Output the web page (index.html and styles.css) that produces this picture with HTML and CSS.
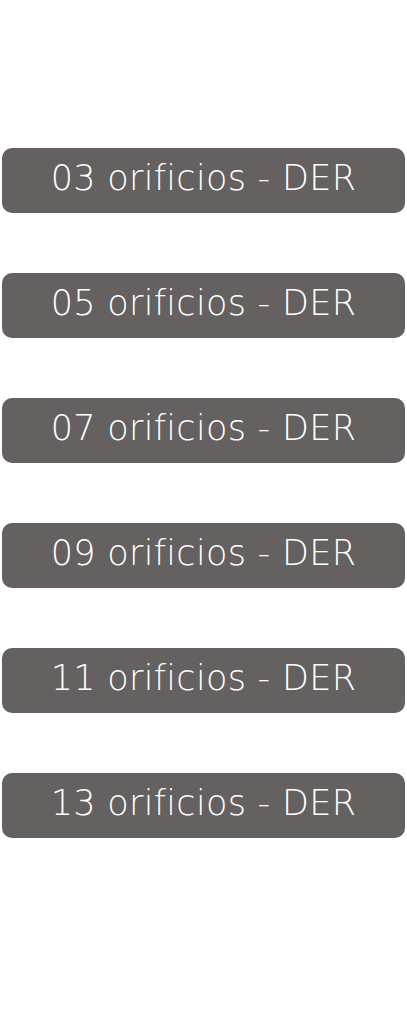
FILE: index.html
```html
<!DOCTYPE html>
<html>

<head>
    <meta charset="UTF-8">
    <meta name="viewport" content="width=device-width, initial-scale=1.0">
    <title>Orificios</title>
    <link rel="stylesheet" href="styles.css">
</head>

<body>

    <div class="list">
        <a class="btn" href="#">03 orificios - DER</a>
        <a class="btn" href="#">05 orificios - DER</a>
        <a class="btn" href="#">07 orificios - DER</a>
        <a class="btn" href="#">09 orificios - DER</a>
        <a class="btn" href="#">11 orificios - DER</a>
        <a class="btn" href="#">13 orificios - DER</a>
    </div>

</body>
</html>
```

FILE: styles.css
```css
*{
    margin: 0px;
    padding: 0px;
    box-sizing: border-box;
}
body{
    background: #fff;
    font-family: "DejaVu Sans", sans-serif;
}
.list{
    display: flex;
    flex-direction: column;
    gap: 60px;
    padding: 148px 2px 0px 2px;
}
.btn{
    display: flex;
    align-items: center;
    justify-content: center;
    height: 65px;
    padding-bottom: 5px;
    background-color: #656160;
    border-radius: 10px;
    color: #fff;
    text-decoration: none;
    font-size: 35px;
    font-weight: 200;
    letter-spacing: 0.3px;
    font-variant-ligatures: none;
}
```
